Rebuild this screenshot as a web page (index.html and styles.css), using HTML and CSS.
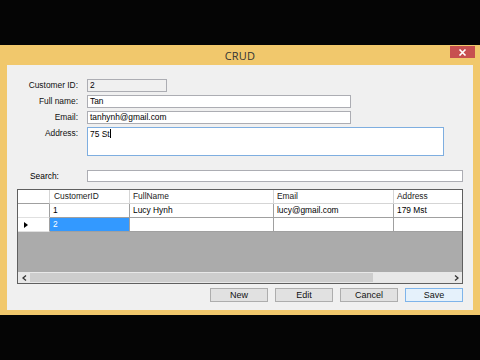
FILE: index.html
```html
<!DOCTYPE html>
<html>
<head>
<meta charset="utf-8">
<link rel="stylesheet" href="styles.css">
</head>
<body>
<div class="window">
  <div class="titlebar">
    <span class="title">CRUD</span>
    <div class="close"><svg width="9" height="7" viewBox="0 0 9 7"><path d="M1.5 0.5 L7.5 6.5 M7.5 0.5 L1.5 6.5" stroke="#fff" stroke-width="1.6"/></svg></div>
  </div>
  <div class="client">
    <div class="form">
      <label class="lbl">Customer ID:</label>
      <div class="box ro w80">2</div>
      <label class="lbl">Full name:</label>
      <div class="box w264">Tan</div>
      <label class="lbl">Email:</label>
      <div class="box w264">tanhynh@gmail.com</div>
      <label class="lbl">Address:</label>
      <div class="box area">75 St<span class="caret"></span></div>
    </div>
    <div class="search">
      <label class="slbl">Search:</label>
      <div class="box sbox"></div>
    </div>
    <div class="grid">
      <div class="row head">
        <div class="c rh"></div>
        <div class="c c1">CustomerID</div>
        <div class="c c2">FullName</div>
        <div class="c c3">Email</div>
        <div class="c c4">Address</div>
      </div>
      <div class="row">
        <div class="c rh"></div>
        <div class="c c1">1</div>
        <div class="c c2">Lucy Hynh</div>
        <div class="c c3">lucy@gmail.com</div>
        <div class="c c4">179 Mst</div>
      </div>
      <div class="row">
        <div class="c rh"><span class="arrow"></span></div>
        <div class="c c1 sel">2</div>
        <div class="c c2"></div>
        <div class="c c3"></div>
        <div class="c c4"></div>
      </div>
      <div class="empty"></div>
      <div class="hscroll">
        <div class="sarrow"><svg width="5" height="6" viewBox="0 0 5 6"><path d="M4 0.5 L1 3 L4 5.5" fill="none" stroke="#333" stroke-width="1.3"/></svg></div>
        <div class="track"><div class="thumb"></div></div>
        <div class="sarrow"><svg width="5" height="6" viewBox="0 0 5 6"><path d="M1 0.5 L4 3 L1 5.5" fill="none" stroke="#333" stroke-width="1.3"/></svg></div>
      </div>
    </div>
    <div class="buttons">
      <div class="btn">New</div>
      <div class="btn">Edit</div>
      <div class="btn">Cancel</div>
      <div class="btn def">Save</div>
    </div>
  </div>
</div>
</body>
</html>
```
FILE: styles.css
```css
html, body {
  margin: 0;
  padding: 0;
  background: #050505;
  width: 480px;
  height: 360px;
  overflow: hidden;
}
body {
  padding-top: 45px;
  box-sizing: border-box;
  font-family: "Liberation Sans", Arial, sans-serif;
  font-size: 8.4px;
  color: #000;
}
.window {
  width: 480px;
  height: 270px;
  background: #f1c86c;
  padding: 0 7px 5px 7px;
  box-sizing: border-box;
  display: flex;
  flex-direction: column;
}
.titlebar {
  height: 20px;
  position: relative;
  display: flex;
  align-items: center;
  justify-content: center;
}
.title {
  font-family: "Open Sans", "Noto Sans", sans-serif;
  font-size: 11px;
  color: #333;
  letter-spacing: 0.2px;
}
.close {
  position: absolute;
  right: -2px;
  top: 1px;
  width: 25px;
  height: 12px;
  background: #c75050;
  display: flex;
  align-items: center;
  justify-content: center;
}
.client {
  flex: 1;
  background: #f0f0f0;
  display: flex;
  flex-direction: column;
}
.form {
  display: grid;
  grid-template-columns: 71px auto;
  column-gap: 9px;
  row-gap: 3px;
  padding-top: 14px;
  align-items: start;
}
.lbl {
  text-align: right;
  line-height: 13px;
  color: #111;
}
.box {
  height: 13px;
  box-sizing: border-box;
  border: 1px solid #acadb3;
  background: #fff;
  padding: 0 2px;
  line-height: 11px;
  white-space: nowrap;
  overflow: hidden;
}
.ro { background: #f0f0f0; }
.w80 { width: 80px; }
.w264 { width: 264px; }
.area {
  width: 357px;
  height: 29px;
  border-color: #7eaee0;
  padding-top: 1px;
}
.caret {
  display: inline-block;
  width: 1px;
  height: 9px;
  background: #000;
  vertical-align: -1px;
}
.search {
  display: flex;
  align-items: center;
  margin-top: 14px;
  padding-left: 23px;
}
.slbl {
  width: 57px;
  line-height: 12px;
}
.sbox {
  width: 376px;
  height: 12px;
}
.grid {
  margin: 7px 0 0 10px;
  width: 446px;
  height: 95px;
  box-sizing: border-box;
  border: 1px solid #5f5f5f;
  display: flex;
  flex-direction: column;
  background: #ababab;
  overflow: hidden;
}
.row {
  display: flex;
  height: 14px;
  background: #fff;
  flex: none;
}
.c {
  box-sizing: border-box;
  height: 14px;
  line-height: 13px;
  padding-left: 3px;
  border-right: 1px solid #a0a0a0;
  border-bottom: 1px solid #a0a0a0;
  white-space: nowrap;
  overflow: hidden;
  display: flex;
  align-items: center;
}
.head .c { border-color: #d5d5d5; color: #222; }
.head .c1 { padding-left: 4px; }
.rh { width: 32px; border-right-color: #a0a0a0; border-bottom-color: #e0e0e0; }
.head .rh { border-bottom-color: #a0a0a0; }
.c1 { width: 80px; }
.c2 { width: 144px; }
.c3 { width: 120px; }
.c4 { flex: 1; border-right: none; }
.sel {
  background: #3399ff;
  color: #fff;
}
.arrow {
  display: block;
  margin-left: 3px;
  width: 0;
  height: 0;
  border-left: 4px solid #000;
  border-top: 3px solid transparent;
  border-bottom: 3px solid transparent;
}
.empty { flex: 1; }
.hscroll {
  height: 11px;
  flex: none;
  display: flex;
  background: #e8e8e8;
}
.sarrow {
  width: 12px;
  display: flex;
  align-items: center;
  justify-content: center;
}
.track {
  flex: 1;
  display: flex;
  align-items: stretch;
  padding: 1px 0;
}
.thumb {
  width: 343px;
  background: #cdcdcd;
}
.buttons {
  display: flex;
  gap: 7px;
  margin: 4px 0 0 203px;
}
.btn {
  width: 58px;
  height: 14px;
  box-sizing: border-box;
  border: 1px solid #adadad;
  background: #e1e1e1;
  text-align: center;
  line-height: 12px;
  font-size: 9px;
  color: #111;
}
.def {
  border-color: #7eb4ea;
  background: #e5f1fb;
}
```
